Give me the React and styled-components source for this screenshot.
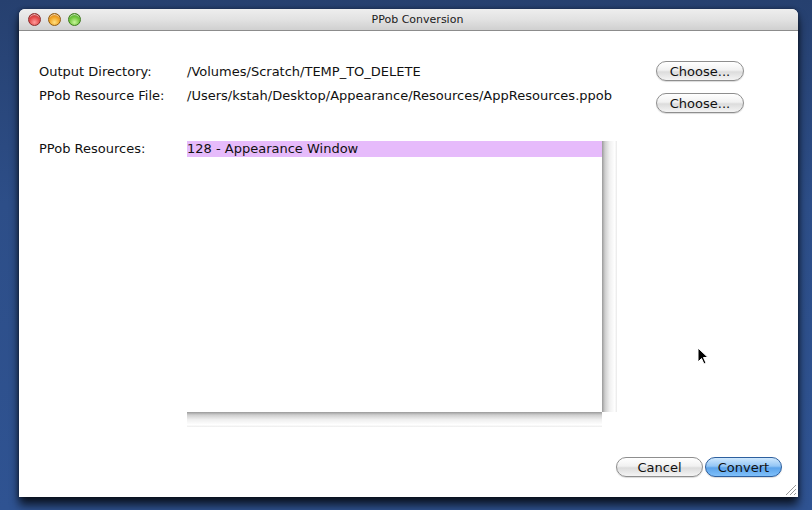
import React from 'react';
import styled, { createGlobalStyle } from 'styled-components';

const GlobalStyle = createGlobalStyle`
  html, body {
    margin: 0;
    padding: 0;
  }
  body {
    font-family: "DejaVu Sans", "Liberation Sans", sans-serif;
    font-size: 13px;
    color: #000;
  }
`;

const Desktop = styled.div`
  position: relative;
  width: 812px;
  height: 510px;
  overflow: hidden;
  background: linear-gradient(180deg, #26406f 0%, #2d4e88 40%, #2f5392 100%);
  padding: 9px 0 0 19px;
  box-sizing: border-box;
`;

const Window = styled.div`
  position: relative;
  width: 779px;
  height: 488px;
  display: flex;
  flex-direction: column;
  border-radius: 6px 6px 0 0;
  background: #fff;
  box-shadow: 0 8px 10px rgba(0, 0, 0, 0.75), 0 0 4px rgba(0, 0, 0, 0.45);
`;

const TitleBar = styled.div`
  position: relative;
  height: 21px;
  flex: none;
  display: flex;
  align-items: center;
  justify-content: center;
  padding-left: 18px;
  border-radius: 6px 6px 0 0;
  background: linear-gradient(180deg, #eeeeee 0%, #e2e2e2 50%, #d0d0d0 100%);
  border-bottom: 1px solid #8c8c8c;
  font-size: 11px;
  color: #1a1a1a;
`;

const Lights = styled.div`
  position: absolute;
  left: 9px;
  top: 4px;
  display: flex;
  gap: 7px;
`;

const Light = styled.div`
  width: 13px;
  height: 13px;
  border-radius: 50%;
  box-sizing: border-box;
  border: 1px solid ${p => p.$edge};
  background: radial-gradient(circle at 50% 75%, ${p => p.$glow} 0%, ${p => p.$base} 55%, ${p => p.$dark} 100%);
  box-shadow: inset 0 2px 1px -1px rgba(255, 255, 255, 0.7);
`;

const Content = styled.div`
  flex: 1;
  display: flex;
  flex-direction: column;
  padding: 30px 16px 20px 20px;
`;

const TopSection = styled.div`
  display: flex;
  height: 52px;
  padding-right: 38px;
`;

const Fields = styled.div`
  flex: 1;
  display: flex;
  flex-direction: column;
  gap: 4px;
`;

const FieldRow = styled.div`
  display: grid;
  grid-template-columns: 148px 1fr;
  height: 20px;
  align-items: center;
  white-space: nowrap;
`;

const Label = styled.span`
  color: #111;
`;

const Value = styled.span`
  color: #111;
`;

const ButtonColumn = styled.div`
  display: flex;
  flex-direction: column;
  gap: 12px;
`;

const AquaButton = styled.button`
  width: ${p => p.$width}px;
  height: 20px;
  padding: 0;
  border-radius: 10px;
  font-family: "DejaVu Sans", "Liberation Sans", sans-serif;
  font-size: 13px;
  color: #111;
  border: 1px solid ${p => (p.$primary ? '#2d5f9e' : '#8e8e8e')};
  background: ${p =>
    p.$primary
      ? 'linear-gradient(180deg, #cfe8fd 0%, #94c6f5 45%, #5ca3ea 55%, #7fc0fa 100%)'
      : 'linear-gradient(180deg, #ffffff 0%, #f1f1f1 45%, #dcdcdc 55%, #f4f4f4 100%)'};
  box-shadow: 0 1px 1px rgba(0, 0, 0, 0.15);
`;

const ListSection = styled.div`
  display: grid;
  grid-template-columns: 148px auto;
  margin-top: 28px;
  height: 286px;
`;

const ListLabel = styled.div`
  line-height: 16px;
  color: #111;
`;

const ScrollPane = styled.div`
  display: grid;
  grid-template-columns: 415px 15px;
  grid-template-rows: 271px 15px;
`;

const ListBox = styled.div`
  background: #fff;
`;

const ListItem = styled.div`
  height: 16px;
  line-height: 15px;
  background: ${p => (p.$selected ? '#e6bbfb' : 'transparent')};
  color: #111;
`;

const VTrack = styled.div`
  background: linear-gradient(90deg, #9a9a9a 0%, #cfcfcf 20%, #efefef 50%, #ffffff 85%, #e8e8e8 100%);
`;

const HTrack = styled.div`
  background: linear-gradient(180deg, #9a9a9a 0%, #cfcfcf 20%, #efefef 50%, #ffffff 85%, #ececec 100%);
`;

const Footer = styled.div`
  margin-top: auto;
  display: flex;
  justify-content: flex-end;
  gap: 2px;
`;

const Grip = styled.svg`
  position: absolute;
  right: 1px;
  bottom: 1px;
`;

const Cursor = styled.svg`
  position: absolute;
  left: 697px;
  top: 347px;
`;

const App = () => {
  return (
    <Desktop>
      <GlobalStyle />
      <Window>
        <TitleBar>
          <Lights>
            <Light $edge="#8a2a2a" $base="#e04545" $glow="#ff9a9a" $dark="#a51e1e" />
            <Light $edge="#8f5a10" $base="#f0a020" $glow="#ffe080" $dark="#c07010" />
            <Light $edge="#3d7a1c" $base="#6cc43a" $glow="#c8f59a" $dark="#3f9420" />
          </Lights>
          PPob Conversion
        </TitleBar>
        <Content>
          <TopSection>
            <Fields>
              <FieldRow>
                <Label>Output Directory:</Label>
                <Value>/Volumes/Scratch/TEMP_TO_DELETE</Value>
              </FieldRow>
              <FieldRow>
                <Label>PPob Resource File:</Label>
                <Value>/Users/kstah/Desktop/Appearance/Resources/AppResources.ppob</Value>
              </FieldRow>
            </Fields>
            <ButtonColumn>
              <AquaButton $width={88}>Choose...</AquaButton>
              <AquaButton $width={88}>Choose...</AquaButton>
            </ButtonColumn>
          </TopSection>
          <ListSection>
            <ListLabel>PPob Resources:</ListLabel>
            <ScrollPane>
              <ListBox>
                <ListItem $selected>128 - Appearance Window</ListItem>
              </ListBox>
              <VTrack />
              <HTrack />
            </ScrollPane>
          </ListSection>
          <Footer>
            <AquaButton $width={87}>Cancel</AquaButton>
            <AquaButton $width={77} $primary>Convert</AquaButton>
          </Footer>
        </Content>
        <Grip width="13" height="13" viewBox="0 0 13 13">
          <path d="M12 2 L2 12 M12 6 L6 12 M12 10 L10 12" stroke="#9a9a9a" strokeWidth="1" />
          <path d="M12 3 L3 12 M12 7 L7 12" stroke="#ffffff" strokeWidth="1" />
        </Grip>
      </Window>
      <Cursor width="12" height="19" viewBox="0 0 12 19">
        <path d="M1 1 L1 15 L4.5 11.5 L7 17 L9 16 L6.5 10.5 L11 10.5 Z" fill="#000" stroke="#fff" strokeWidth="1" />
      </Cursor>
    </Desktop>
  );
};

export default App;
